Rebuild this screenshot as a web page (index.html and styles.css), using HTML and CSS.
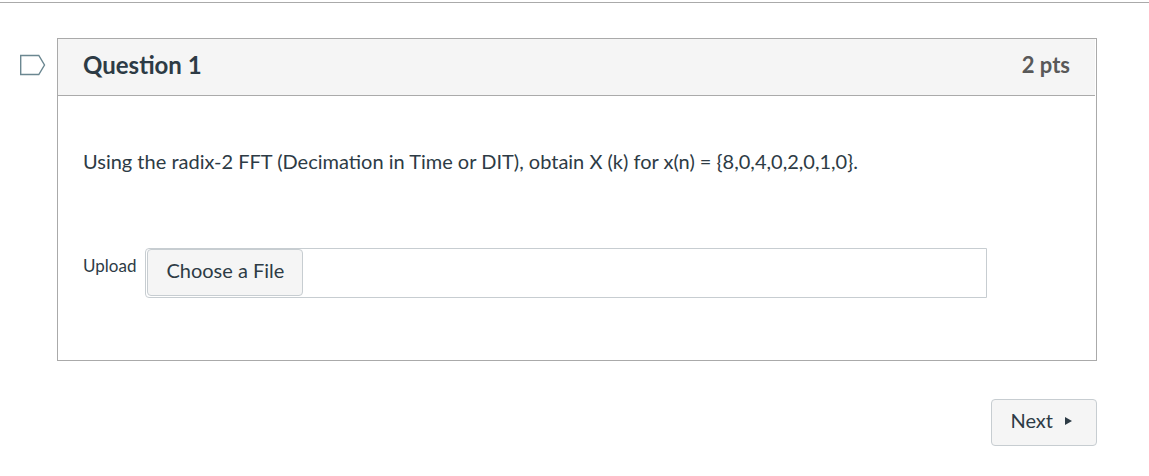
FILE: index.html
```
<!DOCTYPE html>
<html lang="en">
<head>
<meta charset="utf-8">
<title>Question 1</title>
<link rel="stylesheet" href="styles.css">
</head>
<body>
<main class="quiz">
  <div class="question-row">
    <button class="flag" type="button" aria-label="Flag question">
      <svg width="26" height="22" viewBox="0 0 26 22" fill="none" stroke="#6b8791" stroke-width="1.4"><path d="M.7 1.500H18.800L24.500 11L18.800 20.500H.7Z"/></svg>
    </button>
    <section class="question">
      <header class="question-header">
        <h1 class="title">Question 1</h1>
        <span class="points">2 pts</span>
      </header>
      <div class="question-body">
        <p class="prompt">Using the radix-2 FFT (Decimation in Time or DIT), obtain X (k) for x(n) = {8,0,4,0,2,0,1,0}.</p>
        <div class="upload">
          <label class="upload-label" for="choose">Upload</label>
          <div class="file-box"><button class="button choose" id="choose" type="button">Choose a File</button></div>
        </div>
      </div>
    </section>
  </div>
  <div class="actions">
    <button class="button next" type="button">Next
      <svg width="7" height="10" viewBox="0 0 7 10" aria-hidden="true"><path d="M0 2L7 6L0 10Z" fill="#2d3b45"/></svg>
    </button>
  </div>
</main>
</body>
</html>
```
FILE: styles.css
```
* { box-sizing: border-box; }
body {
  margin: 0;
  background: #fff;
  color: #2d3b45;
  font-family: Lato, "Liberation Sans", sans-serif;
  font-size: 20px;
}
.quiz {
  margin-top: 2px;
  border-top: 1px solid #aaa;
  padding: 35px 52px 30px 20px;
}
.question-row { display: flex; align-items: flex-start; gap: 11px; }
.flag {
  display: flex;
  width: 26px;
  margin: 16px 0 0;
  padding: 0;
  border: 0;
  background: none;
}
.question { flex: 1; border: 1px solid #aaa; }
.question-header {
  display: flex;
  justify-content: space-between;
  align-items: center;
  height: 57px;
  margin-right: 1px;
  padding: 0 25px 5px;
  background: #f5f5f5;
  border-bottom: 1px solid #aaa;
}
.title { margin: 0; font-size: 24px; font-weight: 700; }
.points { font-size: 22px; font-weight: 700; color: #595959; }
.question-body { padding: 49px 109px 62px 25px; }
.prompt { margin: 0; line-height: 32px; }
.upload { display: flex; align-items: flex-start; gap: 9px; margin-top: 71px; }
.upload-label { font-size: 17px; line-height: 36px; }
.file-box {
  flex: 1;
  padding: 0 0 1px 1px;
  border: 1px solid #c7cdd1;
  border-radius: 4px 0 0 4px;
}
.button {
  height: 47px;
  padding: 0 18px 6px;
  border: 1px solid #c7cdd1;
  border-radius: 4px;
  background: #f5f5f5;
  color: #2d3b45;
  font: inherit;
}
.choose { display: block; }
.actions { display: flex; justify-content: flex-end; margin-top: 38px; }
.next { display: flex; align-items: center; gap: 12px; padding-right: 24px; }
```
